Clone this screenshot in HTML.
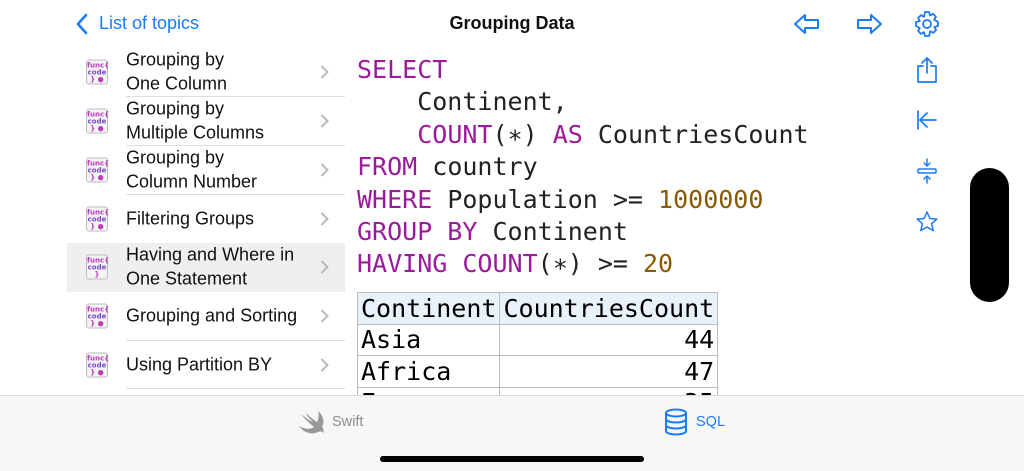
<!DOCTYPE html>
<html><head><meta charset="utf-8"><style>
*{margin:0;padding:0;box-sizing:border-box}
body{width:1024px;height:471px;overflow:hidden;background:#fff;font-family:"Liberation Sans",sans-serif;position:relative}
.abs{position:absolute}
.row{position:absolute;left:67px;width:278px;height:48.7px}
.row .t{position:absolute;left:59px;top:50%;transform:translateY(-50%);font-size:18px;line-height:23.5px;color:#111}
.row .sep{position:absolute;left:59px;right:0;bottom:0;height:1px;background:#ddd}
.row .chev{position:absolute;right:16px;top:50%;transform:translateY(-50%)}
.ic{position:absolute;left:19px;top:50%;transform:translateY(-50%);width:22px;height:25px;border:1px solid #bbb;border-radius:3px;background:#f4f4f4;font-size:7px;font-weight:bold;line-height:7px;font-family:"DejaVu Sans",sans-serif;text-align:center;padding-top:2px}
.code{position:absolute;left:357px;top:54px;font-family:"DejaVu Sans Mono",monospace;font-size:25px;line-height:32.4px;color:#222;white-space:pre}
.k{color:#9b1a9c}.n{color:#8a5a00}
table{position:absolute;left:357px;top:292px;border-collapse:collapse;font-family:"DejaVu Sans Mono",monospace;font-size:25px}
td{border:1px solid #bbb;height:31.5px;padding:0 3px;line-height:29px}
</style></head><body>
<svg class="abs" style="left:75px;top:13px" width="14" height="22" viewBox="0 0 14 22"><path d="M11 2 L3 11 L11 20" fill="none" stroke="#1a7cf5" stroke-width="2.6" stroke-linecap="round" stroke-linejoin="round"/></svg>
<div class="abs" style="left:99px;top:13px;font-size:18px;color:#1a7cf5">List of topics</div>
<div class="abs" style="left:0;width:1024px;top:13px;text-align:center;font-size:18px;font-weight:bold;color:#111">Grouping Data</div>
<svg class="abs" style="left:793px;top:12px" width="28" height="24" viewBox="0 0 28 24"><path d="M2 12 L12 3 L12 8 L25 8 L25 16 L12 16 L12 21 Z" fill="none" stroke="#1a7cf5" stroke-width="2" stroke-linejoin="round"/></svg>
<svg class="abs" style="left:855px;top:12px" width="28" height="24" viewBox="0 0 28 24"><path d="M26 12 L16 3 L16 8 L3 8 L3 16 L16 16 L16 21 Z" fill="none" stroke="#1a7cf5" stroke-width="2" stroke-linejoin="round"/></svg>
<svg class="abs" style="left:913px;top:10px" width="28" height="28" viewBox="0 0 28 28"><g fill="none" stroke="#1a7cf5" stroke-width="1.8"><circle cx="14" cy="14" r="4"/><path d="M12 2h4l1 3.5 3-1.7 2.9 2.9-1.7 3L25 12v4l-3.6 1 1.7 3-2.9 2.9-3-1.7L16 26h-4l-1-3.8-3 1.7-2.9-2.9 1.7-3L3 16v-4l3.8-1-1.7-3 2.9-2.9 3 1.7z" stroke-linejoin="round"/></g></svg>
<svg class="abs" style="left:915px;top:56px" width="24" height="28" viewBox="0 0 24 28"><g fill="none" stroke="#1a7cf5" stroke-width="1.7" stroke-linecap="round" stroke-linejoin="round"><path d="M8 10H3v16h18V10h-5"/><path d="M12 2v15M7 7l5-5 5 5"/></g></svg>
<svg class="abs" style="left:915px;top:108px" width="24" height="24" viewBox="0 0 24 24"><g fill="none" stroke="#1a7cf5" stroke-width="1.7" stroke-linecap="round"><path d="M3 3v18M21 12H6M12 5l-7 7 7 7"/></g></svg>
<svg class="abs" style="left:915px;top:158px" width="24" height="26" viewBox="0 0 24 26"><g fill="none" stroke="#1a7cf5" stroke-width="1.5" stroke-linecap="round"><rect x="3" y="11" width="18" height="4" rx="1"/><path d="M12 1v7M9 5l3 3 3-3M12 25v-7M9 21l3-3 3 3"/></g></svg>
<svg class="abs" style="left:915px;top:210px" width="24" height="24" viewBox="0 0 24 24"><path d="M12 2l2.9 6.5 7 .6-5.3 4.6 1.6 6.9L12 17l-6.2 3.6 1.6-6.9L2.1 9.1l7-.6z" fill="none" stroke="#1a7cf5" stroke-width="1.5" stroke-linejoin="round"/></svg>
<div class="abs" style="left:970px;top:168px;width:39px;height:134px;background:#000;border-radius:20px"></div>

<div class="row" style="top:48px"><div class="ic"><span style="color:#c03ac0">func{</span><br><span style="color:#7a4ad0">code</span><br><span style="color:#c03ac0">} ●</span></div><div class="t">Grouping by<br>One Column</div><svg class="chev" width="9" height="15" viewBox="0 0 9 15"><path d="M1.5 1.5L7.5 7.5 1.5 13.5" fill="none" stroke="#bbb" stroke-width="2"/></svg><div class="sep"></div></div>
<div class="row" style="top:97px"><div class="ic"><span style="color:#c03ac0">func{</span><br><span style="color:#7a4ad0">code</span><br><span style="color:#c03ac0">} ●</span></div><div class="t">Grouping by<br>Multiple Columns</div><svg class="chev" width="9" height="15" viewBox="0 0 9 15"><path d="M1.5 1.5L7.5 7.5 1.5 13.5" fill="none" stroke="#bbb" stroke-width="2"/></svg><div class="sep"></div></div>
<div class="row" style="top:146px"><div class="ic"><span style="color:#c03ac0">func{</span><br><span style="color:#7a4ad0">code</span><br><span style="color:#c03ac0">} ●</span></div><div class="t">Grouping by<br>Column Number</div><svg class="chev" width="9" height="15" viewBox="0 0 9 15"><path d="M1.5 1.5L7.5 7.5 1.5 13.5" fill="none" stroke="#bbb" stroke-width="2"/></svg><div class="sep"></div></div>
<div class="row" style="top:194.5px"><div class="ic"><span style="color:#c03ac0">func{</span><br><span style="color:#7a4ad0">code</span><br><span style="color:#c03ac0">} ●</span></div><div class="t">Filtering Groups</div><svg class="chev" width="9" height="15" viewBox="0 0 9 15"><path d="M1.5 1.5L7.5 7.5 1.5 13.5" fill="none" stroke="#bbb" stroke-width="2"/></svg></div>
<div class="row" style="top:243px;background:#efefef"><div class="ic"><span style="color:#c03ac0">func{</span><br><span style="color:#7a4ad0">code</span><br><span style="color:#c03ac0">}</span></div><div class="t">Having and Where in<br>One Statement</div><svg class="chev" width="9" height="15" viewBox="0 0 9 15"><path d="M1.5 1.5L7.5 7.5 1.5 13.5" fill="none" stroke="#bbb" stroke-width="2"/></svg></div>
<div class="row" style="top:292px"><div class="ic"><span style="color:#c03ac0">func{</span><br><span style="color:#7a4ad0">code</span><br><span style="color:#c03ac0">} ●</span></div><div class="t">Grouping and Sorting</div><svg class="chev" width="9" height="15" viewBox="0 0 9 15"><path d="M1.5 1.5L7.5 7.5 1.5 13.5" fill="none" stroke="#bbb" stroke-width="2"/></svg><div class="sep"></div></div>
<div class="row" style="top:340.5px"><div class="ic"><span style="color:#c03ac0">func{</span><br><span style="color:#7a4ad0">code</span><br><span style="color:#c03ac0">} ●</span></div><div class="t">Using Partition BY</div><svg class="chev" width="9" height="15" viewBox="0 0 9 15"><path d="M1.5 1.5L7.5 7.5 1.5 13.5" fill="none" stroke="#bbb" stroke-width="2"/></svg><div class="sep"></div></div>

<div class="code"><span class="k">SELECT</span>
    Continent,
    <span class="k">COUNT</span>(∗) <span class="k">AS</span> CountriesCount
<span class="k">FROM</span> country
<span class="k">WHERE</span> Population &gt;= <span class="n">1000000</span>
<span class="k">GROUP BY</span> Continent
<span class="k">HAVING</span> <span class="k">COUNT</span>(∗) &gt;= <span class="n">20</span></div>
<table>
<tr style="background:#e9f1fa"><td>Continent</td><td>CountriesCount</td></tr>
<tr><td>Asia</td><td style="text-align:right">44</td></tr>
<tr><td>Africa</td><td style="text-align:right">47</td></tr>
<tr><td>Europe</td><td style="text-align:right">35</td></tr>
</table>

<div class="abs" style="left:0;top:395px;width:1024px;height:76px;background:#f7f7f7;border-top:1px solid #d8d8d8"></div>
<svg class="abs" style="left:298px;top:409px" width="28" height="26" viewBox="0 0 28 26"><path d="M20 2c5 4 7 11 4 16 2 2 2 5 1 6-1-2-3-2-5-1-6 3-14 1-19-6 5 3 11 4 15 1C11 14 6 9 3 5c4 3 9 7 12 8C12 10 9 7 8 4c4 4 8 7 11 9 2-4 2-8 1-11z" fill="#999"/></svg>
<div class="abs" style="left:332px;top:414px;font-size:14.5px;color:#8e8e8e">Swift</div>
<svg class="abs" style="left:664px;top:408px" width="24" height="28" viewBox="0 0 24 28"><g fill="none" stroke="#1a7cf5" stroke-width="2"><ellipse cx="12" cy="5" rx="10" ry="3.5"/><path d="M2 5v18c0 2 4.5 3.5 10 3.5s10-1.5 10-3.5V5M2 11c0 2 4.5 3.5 10 3.5s10-1.5 10-3.5M2 17c0 2 4.5 3.5 10 3.5s10-1.5 10-3.5"/></g></svg>
<div class="abs" style="left:696px;top:414px;font-size:14.5px;color:#1a7cf5">SQL</div>
<div class="abs" style="left:380px;top:456px;width:264px;height:6px;border-radius:3px;background:#000"></div>
</body></html>
